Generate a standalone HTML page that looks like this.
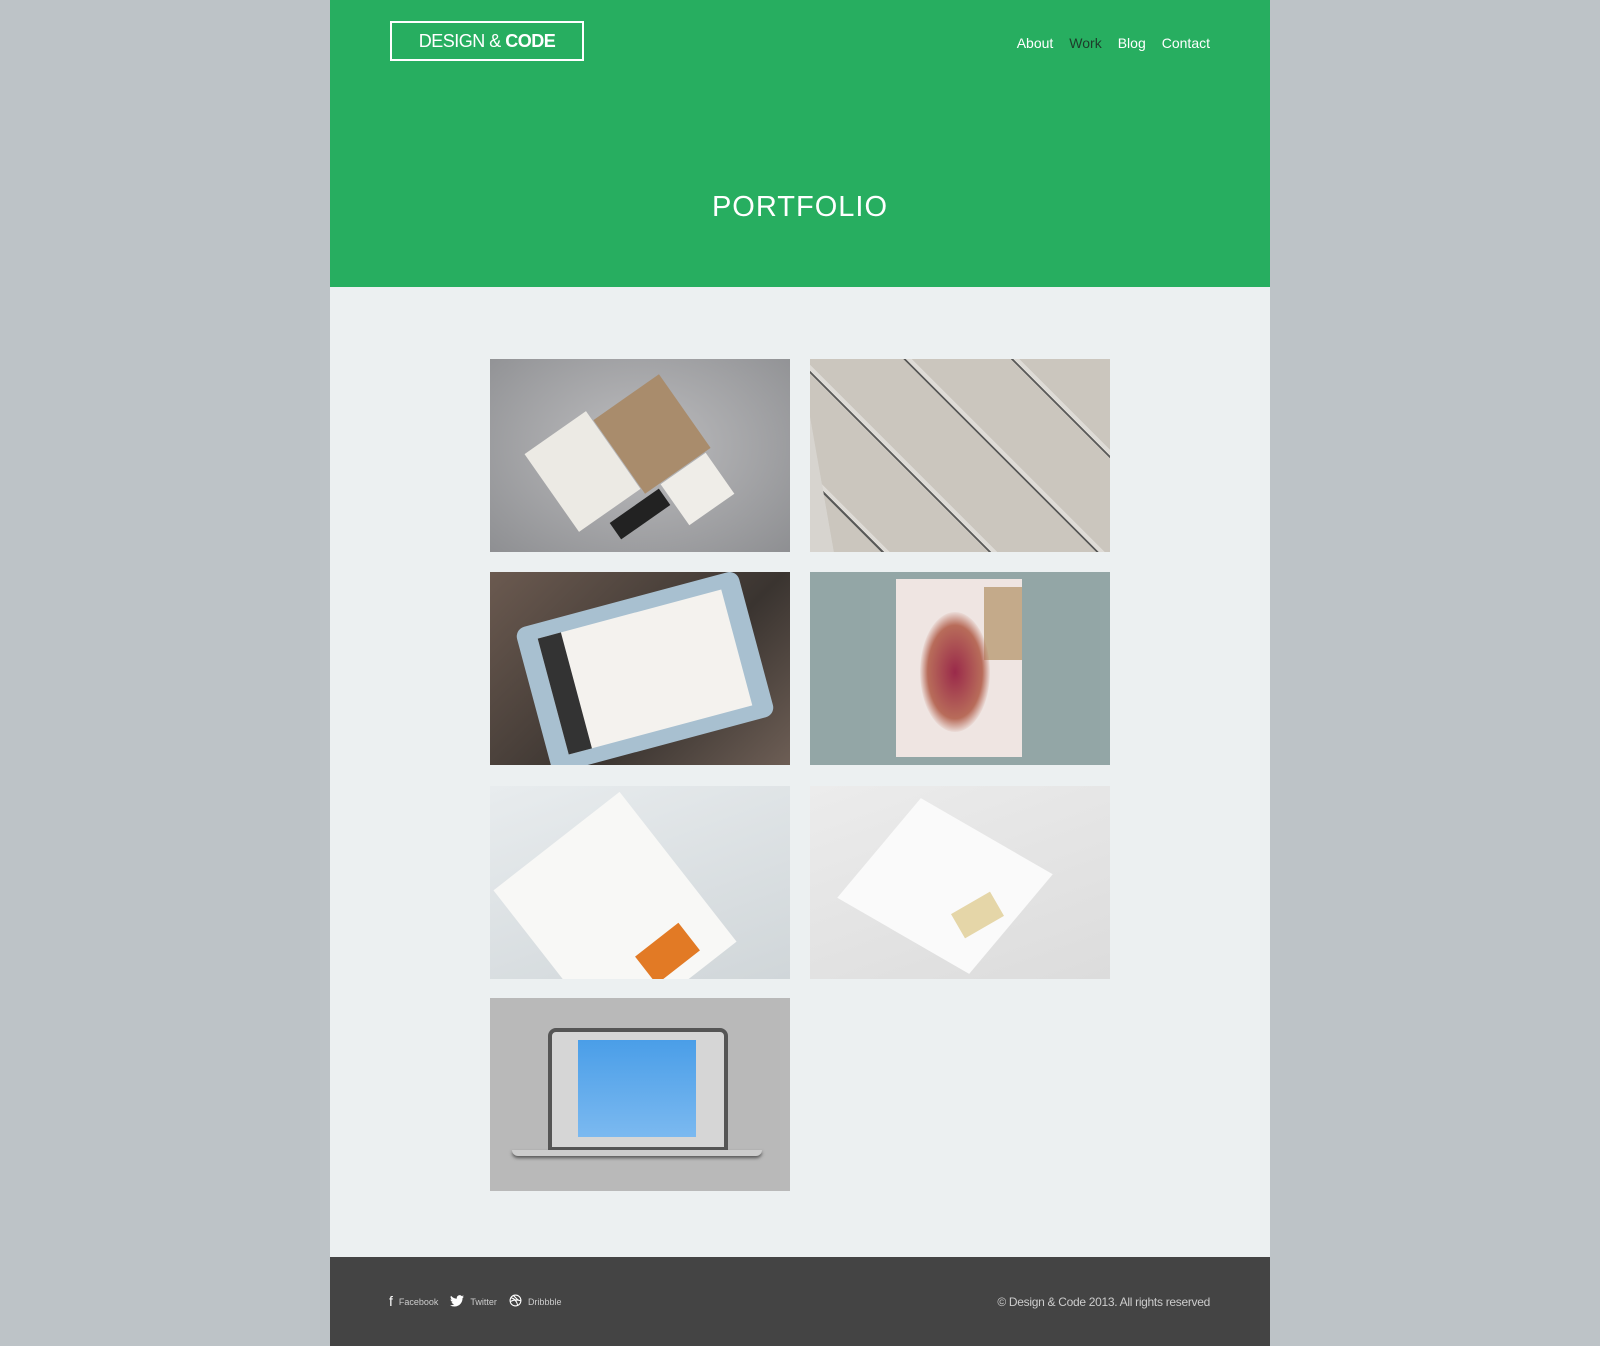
<!DOCTYPE html>
<html><head><meta charset="utf-8"><style>
*{margin:0;padding:0;box-sizing:border-box}
body{width:1600px;height:1346px;background:#bdc3c7;font-family:"Liberation Sans",sans-serif;overflow:hidden}
.wrap{position:absolute;left:330px;width:940px;top:0;height:1346px;background:#ecf0f1}
.hdr{position:absolute;left:0;top:0;width:940px;height:287px;background:#27ae60}
.logo{position:absolute;left:60px;top:21px;width:194px;height:40px;border:2px solid #fff;color:#fff;font-size:18px;line-height:36px;text-align:center;letter-spacing:-0.5px}
.logo b{font-weight:bold}
.nav{position:absolute;right:60px;top:35px;font-size:14px;color:#fff}
.nav span{margin-left:16px}
.nav .on{color:#1e3b2a}
.title{position:absolute;left:0;width:940px;top:191px;text-align:center;color:#fff;font-size:29px;letter-spacing:1px}
.im{position:absolute;width:300px;height:193px;overflow:hidden}
.ftr{position:absolute;left:0;top:1257px;width:940px;height:89px;background:#444}
.fl{position:absolute;left:59px;top:36px;color:#ccc;font-size:9px}
.fl i{font-style:normal;color:#fff;font-size:14px;margin-right:6px;vertical-align:-1px}
.fl svg{vertical-align:-2px;margin-right:6px}
.fl span{margin-right:12px}
.fr{position:absolute;right:60px;top:38px;color:#ccc;font-size:12px;letter-spacing:-0.3px}
</style></head><body>
<div class="wrap">
<div class="hdr">
<div class="logo">DESIGN &amp; <b>CODE</b></div>
<div class="nav"><span>About</span><span class="on">Work</span><span>Blog</span><span>Contact</span></div>
<div class="title">PORTFOLIO</div>
</div>

<div class="im" style="left:160px;top:359px;background:radial-gradient(ellipse at 50% 45%,#bdbdbf,#8e8f92)">
<div style="position:absolute;left:55px;top:65px;width:75px;height:95px;background:#eceae4;transform:rotate(-35deg)"></div>
<div style="position:absolute;left:122px;top:30px;width:80px;height:90px;background:#a98c6c;transform:rotate(-35deg)"></div>
<div style="position:absolute;left:180px;top:105px;width:55px;height:50px;background:#efede8;transform:rotate(-35deg)"></div>
<div style="position:absolute;left:120px;top:145px;width:60px;height:20px;background:#222;transform:rotate(-35deg)"></div>
</div>
<div class="im" style="left:480px;top:359px;background:#d7d4cf">
<div style="position:absolute;left:10px;top:-30px;width:320px;height:260px;background:repeating-linear-gradient(55deg,#c9c4bc 0 70px,#444 70px 72px,#e0ddd8 72px 76px),#cbc6bd;opacity:.85;transform:rotate(-10deg)"></div>
</div>
<div class="im" style="left:160px;top:572px;background:linear-gradient(135deg,#6b5a50,#3a3430 60%,#6d5e55)">
<div style="position:absolute;left:40px;top:25px;width:230px;height:150px;background:#a8c0d0;border-radius:10px;transform:rotate(-15deg)"></div>
<div style="position:absolute;left:60px;top:40px;width:190px;height:120px;background:#f4f2ee;transform:rotate(-15deg);border-left:24px solid #333"></div>
</div>
<div class="im" style="left:480px;top:572px;background:#93a6a6">
<div style="position:absolute;left:86px;top:7px;width:126px;height:178px;background:#efe5e2"></div>
<div style="position:absolute;left:174px;top:15px;width:38px;height:73px;background:#c4aa8a"></div>
<div style="position:absolute;left:110px;top:40px;width:70px;height:120px;border-radius:50%;background:radial-gradient(#9a2a4a,#b86c5a 55%,rgba(200,150,120,0) 72%)"></div>
</div>
<div class="im" style="left:160px;top:786px;background:linear-gradient(160deg,#e8ecee,#d0d6d9)">
<div style="position:absolute;left:45px;top:35px;width:160px;height:190px;background:#f8f8f6;transform:rotate(-38deg)"></div>
<div style="position:absolute;left:150px;top:150px;width:55px;height:35px;background:#e27a25;transform:rotate(-38deg)"></div>
</div>
<div class="im" style="left:480px;top:786px;background:linear-gradient(160deg,#ececec,#dcdcdc)">
<div style="position:absolute;left:70px;top:25px;width:130px;height:150px;background:#fafafa;transform:rotate(-50deg) skewX(10deg)"></div>
<div style="position:absolute;left:145px;top:115px;width:45px;height:28px;background:#e5d6a8;transform:rotate(-30deg)"></div>
</div>
<div class="im" style="left:160px;top:998px;background:#b9b9b9">
<div style="position:absolute;left:58px;top:30px;width:180px;height:123px;background:#d6d6d6;border-radius:8px 8px 0 0;border:4px solid #555"></div>
<div style="position:absolute;left:88px;top:42px;width:118px;height:97px;background:linear-gradient(#4a9ee8,#7bb9f0)"></div>
<div style="position:absolute;left:22px;top:152px;width:250px;height:6px;background:#ccc;border-radius:0 0 40px 40px;box-shadow:0 2px 3px #555"></div>
</div>

<div class="ftr">
<div class="fl"><span><i>f</i>Facebook</span><span><svg width="14" height="12" viewBox="0 0 24 20"><path fill="#fff" d="M24 2.4a10 10 0 0 1-2.8.8A5 5 0 0 0 23.3.4a10 10 0 0 1-3.1 1.2A4.9 4.9 0 0 0 11.8 6 14 14 0 0 1 1.7.9a4.9 4.9 0 0 0 1.5 6.6A4.9 4.9 0 0 1 1 6.9a4.9 4.9 0 0 0 3.9 4.9 5 5 0 0 1-2.2.1 4.9 4.9 0 0 0 4.6 3.4A9.9 9.9 0 0 1 0 17.3 14 14 0 0 0 7.5 19.5c9.1 0 14-7.5 14-14v-.6A10 10 0 0 0 24 2.4z"/></svg>Twitter</span><span><svg width="13" height="13" viewBox="0 0 24 24" fill="none" stroke="#fff" stroke-width="2"><circle cx="12" cy="12" r="10"/><path d="M4 7c5 1 10 5 12 14M2.5 14c5-3 12-4 19-1.5M8 2.5c4 4 7 8 10 9"/></svg>Dribbble</span></div>
<div class="fr">© Design &amp; Code 2013. All rights reserved</div>
</div>
</div>
</body></html>
